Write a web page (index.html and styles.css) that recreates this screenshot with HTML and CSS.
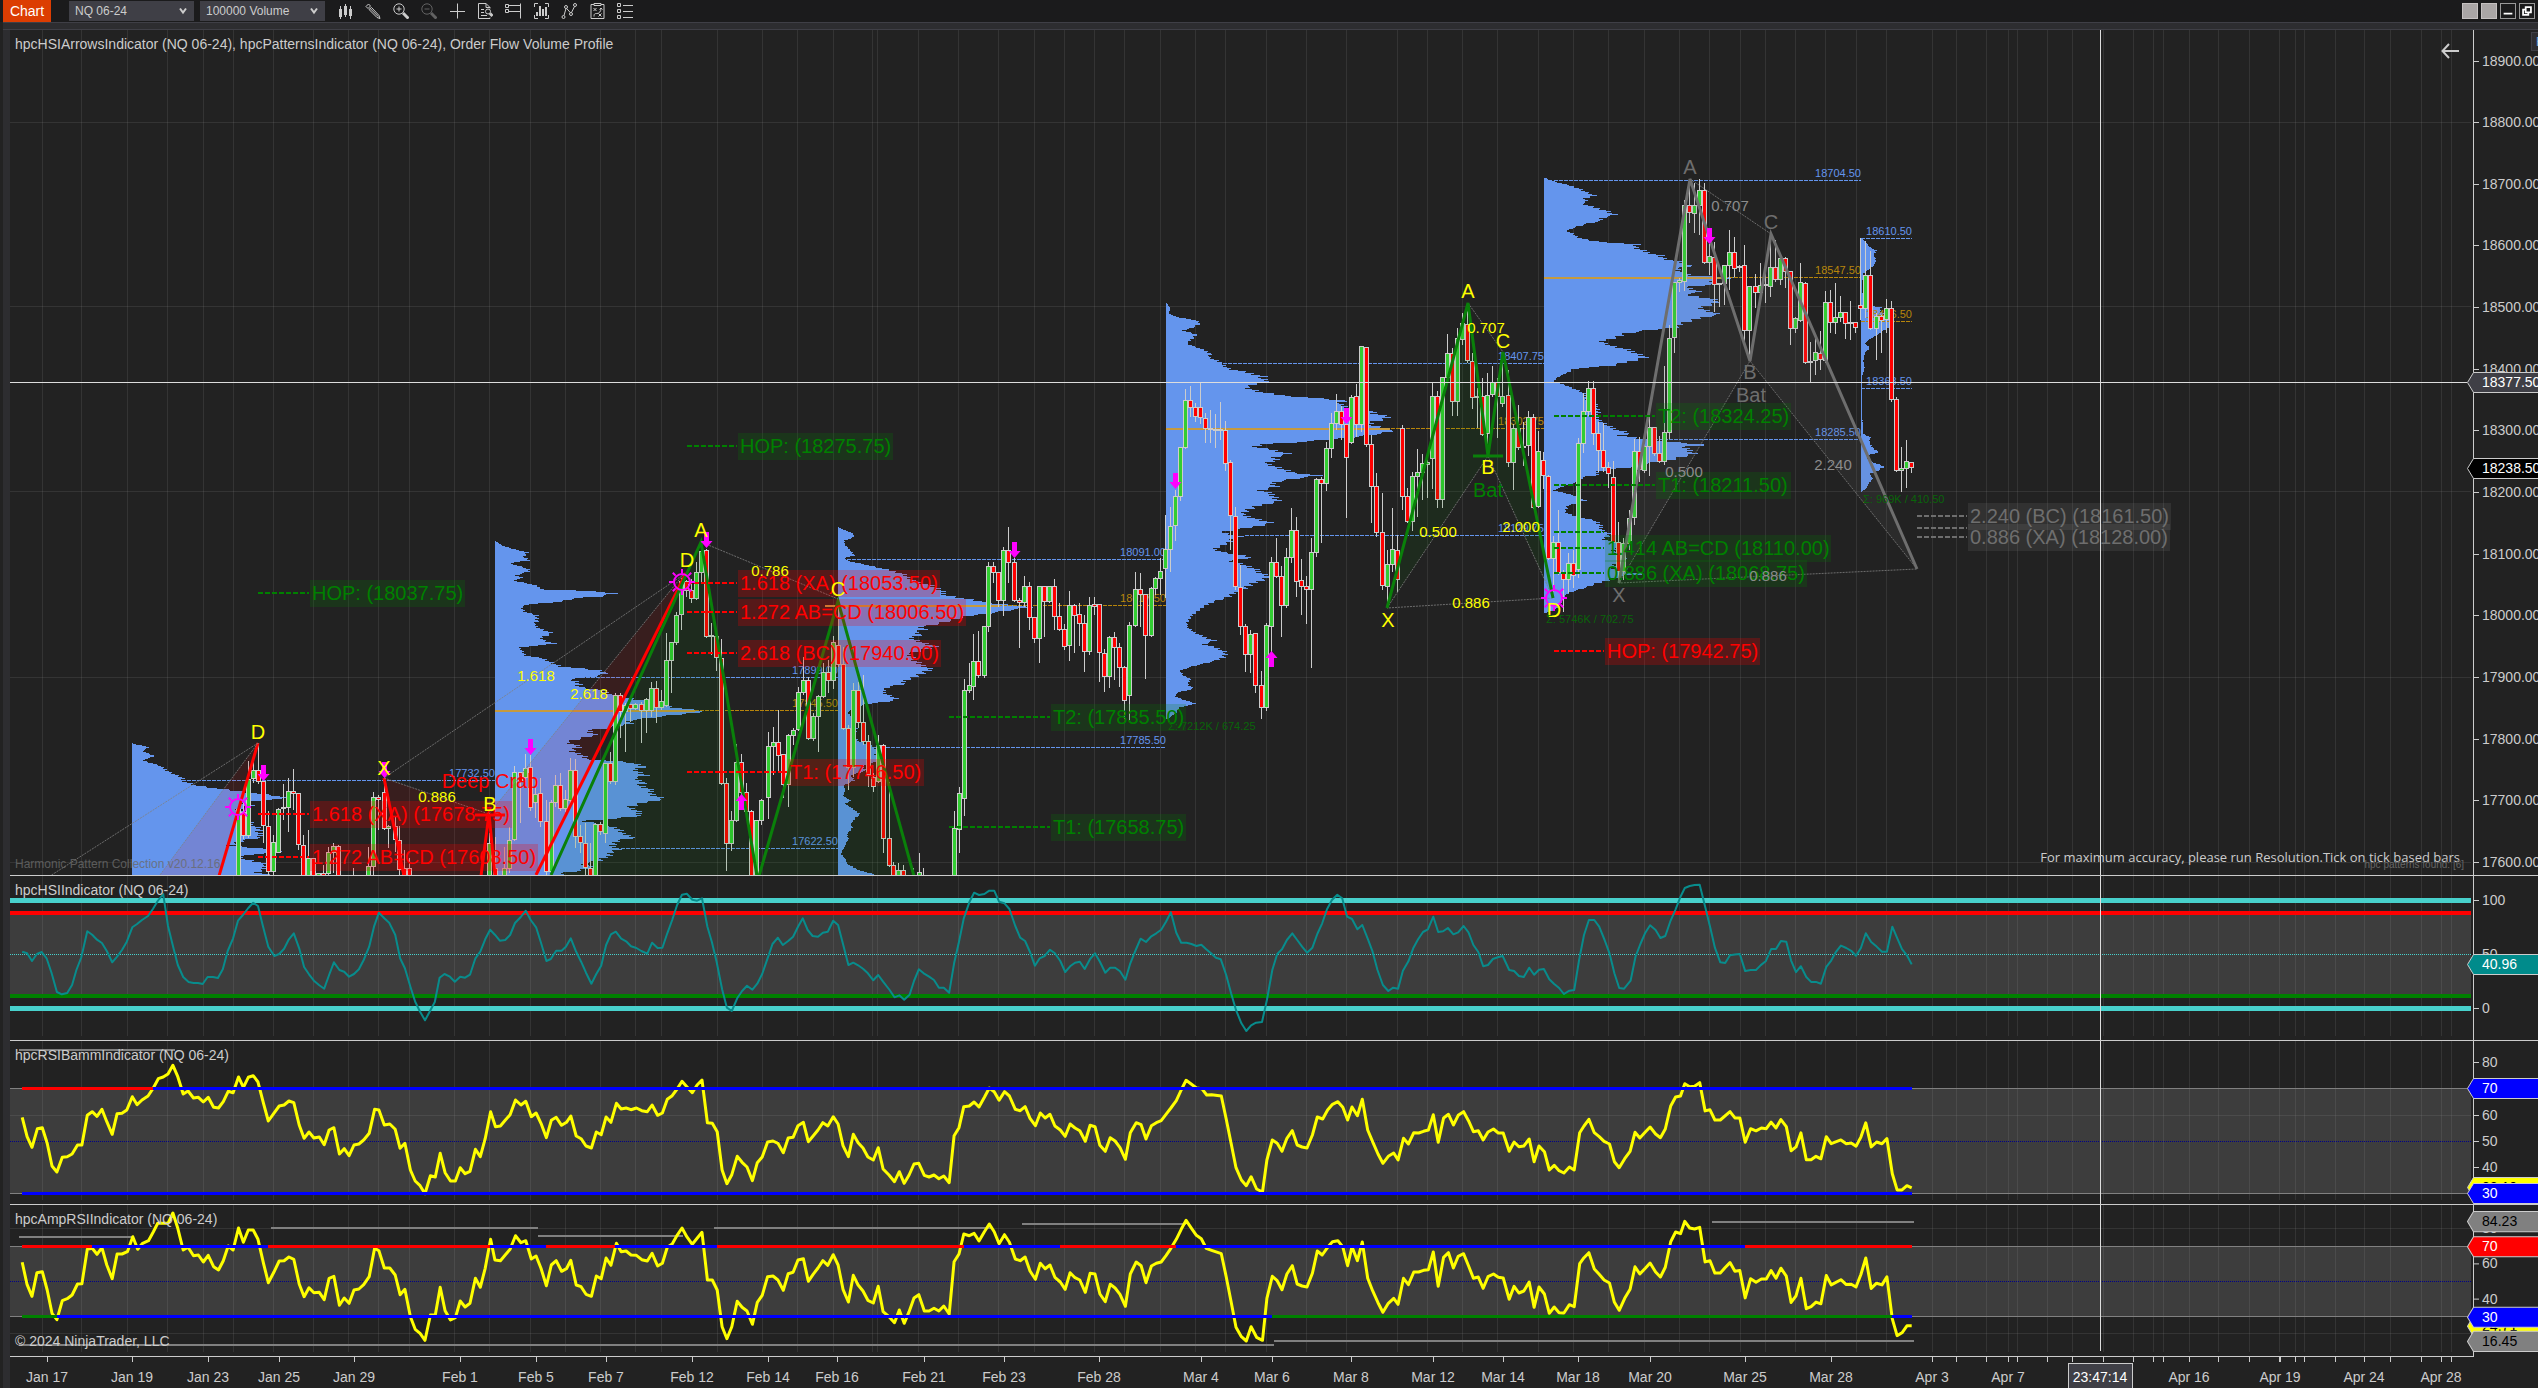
FILE: index.html
```html
<!DOCTYPE html>
<html lang="en">
<head>
<meta charset="utf-8">
<title>Chart - NQ 06-24</title>
<link rel="stylesheet" href="styles.css">
</head>
<body>
<header class="toolbar">
  <a class="tab" href="#chart">Chart</a>
  <label class="picker picker-instrument">
    <select aria-label="Instrument"><option>NQ 06-24</option></select>
    <svg class="chevron" viewBox="0 0 8 8"><path d="M1 1.5 4 5.5 7 1.5"/></svg>
  </label>
  <label class="picker picker-interval">
    <select aria-label="Interval"><option>100000 Volume</option></select>
    <svg class="chevron" viewBox="0 0 8 8"><path d="M1 1.5 4 5.5 7 1.5"/></svg>
  </label>
  <nav class="tools">
    <button type="button" aria-label="Chart style"><svg viewBox="0 0 16 16"><path d="M3.5 3v13M8.500 1v13M13.500 3v13"/><path class="fill" d="M2 6h3v8H2zM7 3h3v9H7zM12 6h3v7h-3z"/></svg></button>
    <button type="button" aria-label="Drawing tools"><svg viewBox="0 0 16 16"><path d="M1 3.500 3.500 1l2 2L3 5.500zM4 6.500 12 14.500l3 1-1-3L6.500 4.500zM5.200 5.500l8 8"/></svg></button>
    <button type="button" aria-label="Zoom in"><svg viewBox="0 0 16 16"><circle cx="6" cy="6" r="5.200"/><path d="M3.500 6h5M6 3.500v5"/><path class="thick" d="m10 10 5.500 5.500"/></svg></button>
    <button type="button" class="off" aria-label="Zoom out"><svg viewBox="0 0 16 16"><circle cx="6" cy="6" r="5.200"/><path d="M3.500 6h5"/><path class="thick" d="m10 10 5.500 5.500"/></svg></button>
    <button type="button" aria-label="Cross hair"><svg viewBox="0 0 16 16"><path d="M8.500.5v15M1 8.500h15"/></svg></button>
    <button type="button" aria-label="Data box"><svg viewBox="0 0 16 16"><path d="M13 14.500v1H1.500V.5H9l4 4v1M9 .5v4h4M4 6.500h3M4 9.500h3M4 12.500h6"/><circle cx="11" cy="8.500" r="2.500"/><path class="thick" d="m13 10.500 2.500 2.500"/></svg></button>
    <button type="button" aria-label="Chart trader"><svg viewBox="0 0 16 16"><path d="M.5 1.500h3v3h-3zM.5 6.500h3v3h-3zM4 2.500h12M4 8.500h12M15.500.5v15"/></svg></button>
    <button type="button" aria-label="Indicators"><svg viewBox="0 0 16 16"><path d="M1.500 4V.5H5M12 .5h3.500V4M15.500 12v3.500H12M5 15.500H1.500V12"/><path class="fill" d="M3 9h2v4H3zM6 3h2v10H6zM9 6h2v7H9zM12 4h2v9h-2z"/></svg></button>
    <button type="button" aria-label="Strategies"><svg viewBox="0 0 16 16"><circle cx="2.500" cy="14" r="1.500"/><circle cx="5" cy="4" r="1.500"/><circle cx="10" cy="11" r="1.500"/><circle cx="14" cy="2" r="1.500"/><path d="M3 12.500 5 5.500M5.500 5.300 9.500 9.800M10.500 9.500 13.500 3.500"/></svg></button>
    <button type="button" aria-label="Strategy builder"><svg viewBox="0 0 16 16"><path d="M5 1.500H2v14h13v-14h-3M5 .5h7v2H5zM4.500 5l3 3M7.500 5l-3 3M9.500 10.500l3 3M12.500 10.500l-3 3M5 13.500c0-3 1-3 3-3s4-2 4-5M10.500 6.500l1.500-1.500 1.500 1.500"/></svg></button>
    <button type="button" aria-label="Properties"><svg viewBox="0 0 16 16"><path d="M.5.5h3v3h-3zM.5 6.500h3v3h-3zM.5 12.500h3v3h-3zM6 2.500h10M6 8.500h10M6 14.500h10"/></svg></button>
  </nav>
  <div class="window-buttons">
    <button type="button" class="plain" aria-label="Link instrument"></button>
    <button type="button" class="plain" aria-label="Link interval"></button>
    <button type="button" aria-label="Minimize"><svg viewBox="0 0 16 16"><path class="fill" d="M3 10h10v2H3z"/></svg></button>
    <button type="button" aria-label="Restore"><svg viewBox="0 0 16 16"><path class="heavy" d="M6.500 3.500h6v6h-6zM6 6.500H3.500v6h6V10"/></svg></button>
  </div>
</header>
<main class="chart" id="chart">
  <section class="panel">
    <h2 class="title">hpcHSIArrowsIndicator (NQ 06-24), hpcPatternsIndicator (NQ 06-24), Order Flow Volume Profile</h2>
    <svg class="plot" id="price" viewBox="10 30 2463 845" preserveAspectRatio="xMaxYMid slice"></svg>
    <svg class="axis" id="price-axis" viewBox="2474 30 64 845" preserveAspectRatio="xMinYMid slice"></svg>
    <button type="button" class="back" aria-label="Back"><svg viewBox="0 0 18 16"><path d="M18 8H1.500M8 1 1.500 8 8 15"/></svg></button>
    <button type="button" class="fixed-scale" aria-label="Fixed scale">F</button>
    <p class="watermark">Harmonic Pattern Collection v20.12.16</p>
    <p class="notice">For maximum accuracy, please run Resolution.Tick on tick based bars</p>
    <p class="found">hpc patterns found: [6]</p>
  </section>
  <section class="panel">
    <h2 class="title">hpcHSIIndicator (NQ 06-24)</h2>
    <svg class="plot" id="hsi" viewBox="10 876 2463 164" preserveAspectRatio="xMaxYMid slice"></svg>
    <svg class="axis" id="hsi-axis" viewBox="2474 876 64 164" preserveAspectRatio="xMinYMid slice"></svg>
  </section>
  <section class="panel">
    <h2 class="title">hpcRSIBammIndicator (NQ 06-24)</h2>
    <svg class="plot" id="rsi" viewBox="10 1041 2463 163" preserveAspectRatio="xMaxYMid slice"></svg>
    <svg class="axis" id="rsi-axis" viewBox="2474 1041 64 163" preserveAspectRatio="xMinYMid slice"></svg>
  </section>
  <section class="panel panel-last">
    <h2 class="title">hpcAmpRSIIndicator (NQ 06-24)</h2>
    <svg class="plot" id="amp" viewBox="10 1205 2463 151" preserveAspectRatio="xMaxYMid slice"></svg>
    <svg class="axis" id="amp-axis" viewBox="2474 1205 64 151" preserveAspectRatio="xMinYMid slice"></svg>
    <p class="copyright">© 2024 NinjaTrader, LLC</p>
  </section>
  <footer class="dates">
    <svg class="plot" id="dates" viewBox="10 1357 2463 31" preserveAspectRatio="xMaxYMid slice"></svg>
  </footer>
</main>
<script src="chart.js"></script>
</body>
</html>
```
FILE: styles.css
```css
* { box-sizing: border-box; }
body {
  margin: 0;
  height: 100vh;
  display: flex;
  flex-direction: column;
  overflow: hidden;
  background: #222;
  color: #ccc;
  font-family: "Liberation Sans", Arial, sans-serif;
  font-size: 14px;
}
button { margin: 0; padding: 0; border: 0; background: none; color: inherit; font: inherit; }
h2, p { margin: 0; font-size: 14px; line-height: 16px; font-weight: 400; white-space: nowrap; }

.toolbar {
  flex: none;
  display: flex;
  align-items: center;
  height: 22px;
  padding: 0 3px;
  background: #1b1b1c;
}
.tab {
  width: 48px;
  line-height: 22px;
  text-align: center;
  background: #dc3d02;
  color: #fff;
  text-decoration: none;
}
.picker {
  position: relative;
  display: flex;
  height: 20px;
  background: #3f3f46;
}
.picker-instrument { width: 125px; margin-left: 18px; }
.picker-interval { width: 125px; margin-left: 6px; }
.picker select {
  appearance: none;
  width: 100%;
  padding: 0 6px;
  border: 0;
  background: none;
  color: #ccc;
  font: 12px "Liberation Sans", Arial, sans-serif;
}
.chevron { position: absolute; right: 7px; top: 6px; width: 8px; height: 8px; fill: none; stroke: #ccc; stroke-width: 2; }
.tools { display: flex; margin-left: 6px; }
.tools button { width: 28px; height: 22px; padding: 3px 6px; }
.tools svg { display: block; width: 16px; height: 16px; fill: none; stroke: #ccc; stroke-width: 1; }
.tools .fill { fill: #ccc; stroke: none; }
.tools .thick { stroke-width: 3; }
.tools .off { opacity: .4; }
.window-buttons { display: flex; gap: 3px; margin-left: auto; }
.window-buttons button { width: 16px; height: 16px; border: 1px solid #999; background: #1b1b1c; }
.window-buttons svg { display: block; width: 14px; height: 14px; }
.window-buttons .fill { fill: #fff; }
.window-buttons .heavy { fill: none; stroke: #fff; stroke-width: 2; }
.window-buttons .plain { background: #aaa6a6; border-color: #c5c1c1; }

.chart {
  flex: 1;
  min-height: 0;
  display: grid;
  grid-template-rows: 846fr 165fr 164fr 152fr 31fr;
  border-top: 8px solid #2d2d30;
  border-left: 7px solid #2d2d30;
  margin-left: 3px;
  position: relative;
}
.chart::before, .chart::after { content: ""; position: absolute; left: -7px; right: 0; height: 1px; background: #3f3f46; }
.chart::before { top: -8px; }
.chart::after { top: -1px; }
.panel {
  position: relative;
  display: grid;
  grid-template-columns: 1fr 65px;
  min-height: 0;
  border-bottom: 1px solid #ccc;
}
.panel-last { border-bottom: 0; }
.panel-last .plot { border-bottom: 1px solid #ccc; }
.plot, .axis { display: block; width: 100%; height: 100%; min-height: 0; }
.axis { border-left: 1px solid #ccc; overflow: visible; }
.dates { display: grid; grid-template-columns: 1fr; margin-right: 65px; min-height: 0; }
.title { position: absolute; left: 5px; top: 6px; z-index: 1; }
.copyright { position: absolute; left: 5px; bottom: 8px; }
.watermark { position: absolute; left: 5px; bottom: 3px; font-size: 12px; color: #6a6a6a; opacity: .8; }
.notice { position: absolute; right: 78px; bottom: 10px; font-family: "Open Sans", "Noto Sans", sans-serif; font-size: 13px; }
.found { position: absolute; right: 74px; bottom: 2px; font-size: 10px; color: #666; }
.back { position: absolute; right: 79px; top: 13px; width: 18px; height: 16px; }
.back svg { display: block; fill: none; stroke: #ccc; stroke-width: 2; }
.fixed-scale {
  position: absolute; right: -14px; top: 2px; width: 21px; height: 19px;
  padding-left: 4px; text-align: left; font-size: 12px;
  border: 1px solid #3f3f46; background: #2d2d30; color: #6fa8dc;
}

text { fill: #ccc; font-size: 14px; }
.mid { text-anchor: middle; }
.end { text-anchor: end; }
.grid { stroke: rgba(150, 150, 150, .16); }
.tick { stroke: #ccc; }
.cross { stroke: #ddd; }
.profile { fill: #6495ed; }
.level { stroke: #6495ed; stroke-dasharray: 4 1; }
.poc { stroke: #b8860b; stroke-dasharray: 4 1; }
.poc-solid { stroke: #c69a3e; stroke-width: 2; }
.level-text { font-size: 11px; fill: #6495ed; }
.poc-text { font-size: 11px; fill: #b8860b; }
.sum { font-size: 11px; fill: #0a640a; }
.wick { stroke: #ccc; }
.up { fill: #32cd32; stroke: #ccc; }
.down { fill: #f00; stroke: #ccc; }
.dots { stroke: #808080; stroke-opacity: .8; stroke-dasharray: 2 1; fill: none; }
.leg { fill: none; stroke-width: 2; }
.leg.green { stroke: #0a800a; }
.leg.red { stroke: #f00; }
.leg.gray { stroke: #6e6e6e; }
.area.green { fill: rgba(0, 128, 0, .1); }
.area.red { fill: rgba(255, 0, 0, .1); }
.area.gray { fill: rgba(128, 128, 128, .1); }
.dash { stroke-width: 2; stroke-dasharray: 5 2; }
.dash.green { stroke: #008000; }
.dash.red { stroke: #f00; }
.dash.gray { stroke: #6e6e6e; }
.box.green { fill: rgba(0, 128, 0, .2); }
.box.red { fill: rgba(255, 0, 0, .24); }
.box.gray { fill: rgba(128, 128, 128, .16); }
.name { font-size: 20px; }
text.green { fill: #008000; }
text.red { fill: #f00; }
text.gray { fill: #6e6e6e; }
text.yellow { fill: #ff0; }
.ratio { font-size: 15px; fill: #ff0; }
.ratio.gray { fill: #8c8c8c; }
.arrow { fill: #f0f; }
.sun { fill: none; stroke: #f0f; stroke-width: 2; }
.shade { fill: #3d3d3d; }
.aqua { stroke: #48d1cc; stroke-width: 5; }
.high { stroke: #f00; stroke-width: 4; }
.low { stroke: #008000; stroke-width: 4; }
.mean { stroke: #48d1cc; stroke-dasharray: 1 1; }
.navy { stroke: #00008b; stroke-dasharray: 1 1; }
.bound { stroke: #808080; }
.swing { stroke: #808080; stroke-width: 2; }
.series { fill: none; stroke-width: 2; stroke-linejoin: round; }
.teal { stroke: #088c8c; }
.gold { stroke: #ff0; stroke-width: 3; }
.leg.green, .leg.gray, .leg.red { stroke-width: 3; }
.tag { stroke: #ccc; }
```
FILE: chart.js
```js
const NS = 'http://www.w3.org/2000/svg';
function add(root, tag, attrs, text) {
  const el = document.createElementNS(NS, tag);
  for (const k in attrs) el.setAttribute(k, attrs[k]);
  if (text !== undefined) el.textContent = text;
  root.appendChild(el);
  return el;
}
const byId = id => document.getElementById(id);
const line = (root, cls, x1, y1, x2, y2) => add(root, 'line', { class: cls, x1, y1, x2, y2 });
const label = (root, cls, x, y, t) => add(root, 'text', { class: cls, x, y }, t);

// A tile stores its data on a finer grid than the plot: [origin x, origin y, units per px x, units per px y].
const tiles = {
  A: [100, 480, 2.8, 3], B: [640, 480, 2.8, 3], C: [1140, 290, 3, 3], D: [1520, 150, 3, 3],
  G: [0, 870, 1.8447, 3], H: [850, 870, 1.8447, 3], I: [1690, 840, 1.849, 2.861]
};
const px = (t, x) => Math.round(tiles[t][0] + x / tiles[t][2]);
const py = (t, y) => Math.round(tiles[t][1] + y / tiles[t][3]);

const vertical = [42, 81, 127, 167, 203, 233, 273, 313, 348, 378, 409, 454, 489, 530, 565, 600, 635, 661, 717, 762, 797, 833, 872, 877, 918, 958, 998, 1034, 1064, 1094, 1124, 1160, 1195, 1225, 1266, 1306, 1346, 1397, 1427, 1462, 1497, 1538, 1573, 1608, 1644, 1679, 1709, 1740, 1765, 1795, 1825, 1856, 1886, 1932, 1956, 1986, 2008, 2017, 2047, 2072, 2103, 2133, 2153, 2163, 2189, 2218, 2249, 2279, 2295, 2304, 2335, 2364, 2390, 2421, 2441, 2451];
function grid(root, top, bottom, rows) {
  vertical.forEach(x => line(root, 'grid', x + .5, top, x + .5, bottom));
  rows.forEach(y => line(root, 'grid', 10, y + .5, 2471, y + .5));
}

// ---- price panel ----
const price = byId('price');
grid(price, 30, 875, [122, 306, 491, 677, 862]);

// left edge, then "y,right edge" pairs
const profiles = [
  ['A', 90, '790,92 800,138 812,118 826,153 840,120 855,165 880,205 890,228 900,230 915,270 925,330 935,410 945,490 953,530 960,440 968,400 975,425 985,385 1000,400 1030,420 1045,450 1055,440 1070,455 1080,400 1095,358 1105,470 1112,515 1118,480 1125,390 1135,400 1150,470 1158,450 1165,470 1175,440 1185,475'],
  ['A', 1106, '183,1110 195,1125 205,1155 215,1198 230,1185 240,1203 248,1145 262,1190 272,1205 285,1165 292,1185 300,1155 310,1205 320,1235 326,1220 330,1330 338,1450 348,1400 355,1315 362,1300 372,1200 380,1180 395,1190 405,1225 420,1225 432,1215 445,1235 458,1265 470,1235 480,1245 490,1275 500,1175 515,1185 525,1190 535,1245 545,1262 558,1290 570,1400 575,1422 582,1410 590,1370 596,1305 605,1345 620,1340 628,1400 640,1430 650,1460 660,1520 670,1560 680,1600 692,1690 700,1640 710,1560 720,1480 730,1480 742,1430 750,1365 765,1385 785,1305 800,1345 812,1320 825,1350 835,1360 845,1480 858,1525 865,1500 875,1510 885,1530 893,1490 905,1530 915,1510 930,1545 945,1550 955,1578 965,1530 980,1480 990,1500 1005,1518 1015,1440 1022,1340 1030,1400 1045,1455 1060,1460 1070,1505 1080,1450 1095,1430 1105,1460 1115,1430 1130,1420 1140,1400 1150,1350 1160,1380 1170,1350 1178,1290 1185,1290'],
  ['B', 554, '142,557 155,590 163,600 175,590 180,572 195,575 210,590 225,600 233,570 242,585 252,630 265,680 280,740 300,760 315,820 330,840 345,860 358,930 368,980 375,1060 380,1100 388,1040 398,980 405,930 415,890 430,830 438,790 446,800 455,770 462,785 470,760 480,775 490,800 497,825 505,810 520,750 530,760 545,780 555,790 568,815 580,790 590,765 600,740 610,745 618,700 628,680 640,690 655,720 662,700 670,640 678,610 690,590 697,580 705,590 720,595 735,600 745,610 758,600 770,605 782,610 795,645 805,665 815,690 822,660 832,670 845,660 858,620 870,635 885,590 900,600 915,570 930,575 945,568 960,590 970,575 985,595 1002,618 1015,600 1030,590 1042,595 1060,580 1075,585 1090,575 1105,570 1120,562 1135,575 1150,580 1162,600 1172,620 1178,650 1185,650'],
  ['C', 78, '38,80 55,92 68,85 80,110 88,165 98,182 110,160 120,130 132,170 145,155 160,142 175,180 188,215 200,205 215,240 235,265 250,340 258,375 263,360 272,388 282,345 292,320 305,360 315,430 322,520 330,615 340,590 345,610 355,640 362,700 370,700 380,750 388,730 395,690 405,690 415,750 420,760 428,730 440,640 448,560 455,480 462,360 470,340 478,400 490,450 500,400 510,405 520,380 530,410 545,450 555,540 565,460 575,400 588,410 600,360 612,400 625,410 632,415 645,360 660,320 672,305 685,350 697,395 705,360 715,310 725,240 738,300 745,280 755,270 775,220 785,250 800,335 810,270 822,310 835,340 845,360 858,390 870,360 885,330 905,290 920,265 935,215 950,190 970,160 985,150 998,140 1012,145 1030,170 1042,200 1050,225 1062,190 1075,240 1085,258 1100,250 1110,230 1120,190 1128,155 1140,120 1155,130 1165,150 1182,145 1195,160 1205,115 1218,105 1228,130 1240,170 1250,120 1265,110 1285,85'],
  ['D', 72, '85,80 95,110 105,150 115,180 125,200 135,222 145,195 153,200 160,185 170,220 180,260 193,285 203,240 210,250 220,200 230,165 240,140 250,160 262,175 272,220 282,355 292,345 305,380 315,425 325,430 335,480 345,520 355,470 365,480 375,520 380,640 384,645 388,560 400,600 410,500 425,540 432,490 445,580 452,595 460,580 470,540 480,560 492,598 500,550 510,520 520,480 530,470 540,380 550,310 560,290 572,245 585,270 595,310 605,345 620,378 635,320 645,280 655,160 668,140 682,110 692,100 705,140 720,175 735,200 750,200 765,230 785,235 795,230 810,240 825,260 840,300 848,330 855,300 865,360 875,460 883,565 890,480 898,510 910,525 920,480 930,440 940,380 950,330 962,230 972,240 980,190 995,170 1008,130 1020,100 1035,165 1050,195 1065,145 1085,135 1098,165 1110,225 1125,240 1140,250 1150,270 1165,250 1180,300 1200,285 1215,300 1230,310 1240,290 1255,270 1265,320 1270,380 1276,310 1285,270 1295,245 1310,200 1325,150 1340,130 1360,120 1375,110 1388,75'],
  ['D', 1024, '265,1026 280,1042 290,1050 300,1068 315,1062 330,1067 345,1063 355,1050 368,1030 400,1026 440,1028 465,1040 470,1085 480,1080 490,1090 500,1105 512,1120 520,1115 530,1108 545,1085 555,1070 568,1045 580,1035 592,1050 605,1035 630,1030 650,1034 680,1026 720,1026 770,1026 820,1028 850,1030 860,1050 880,1050 895,1060 905,1080 912,1050 925,1040 935,1060 948,1092 960,1075 970,1050 985,1058 1000,1045 1012,1040 1024,1026']
];
profiles.forEach(([t, left, data]) => {
  const [ox, oy, sx, sy] = tiles[t];
  const pts = data.split(' ').map(p => p.split(',').map(Number)).map(([y, x]) => [oy + y / sy, ox + x / sx]);
  const x0 = Math.round(ox + left / sx);
  let d = `M${x0} ${Math.round(pts[0][0])}`;
  let i = 0;
  for (let y = Math.round(pts[0][0]); y < pts[pts.length - 1][0]; y++) {
    while (i < pts.length - 2 && pts[i + 1][0] < y) i++;
    const [ya, xa] = pts[i], [yb, xb] = pts[i + 1];
    const k = Math.max(0, Math.min(1, (y - ya) / (yb - ya)));
    const base = xa + (xb - xa) * k;
    const jag = ((y * 37) % 11 - 5) / 5 * Math.min(5, (base - x0) * .06);
    d += `H${Math.round(base + jag)}v1`;
  }
  add(price, 'path', { class: 'profile', d: d + `H${x0}z` });
});

// tile, from, to, y, tile of the end, value, kind
[
  ['A', 230, 'A', 1105, 901, '17732.50', 'level'],
  ['A', 1305, 'B', 553, 592, '17899.00', 'level'],
  ['A', 1106, 'B', 553, 691, '17845.50', 'poc'],
  ['A', 1460, 'B', 553, 1105, '17622.50', 'level'],
  ['B', 580, 'B', 1472, 238, '18091.00', 'level'],
  ['B', 555, 'B', 1472, 376, '18017.50', 'poc'],
  ['B', 690, 'B', 1472, 801, '17785.50', 'level'],
  ['C', 235, 'C', 1212, 220, '18407.75', 'level'],
  ['C', 78, 'C', 1212, 415, '18302.75', 'poc'],
  ['C', 315, 'C', 1212, 736, '18129.75', 'level'],
  ['D', 102, 'D', 1022, 91, '18704.50', 'level'],
  ['D', 72, 'D', 1022, 382, '18547.50', 'poc'],
  ['D', 72, 'D', 1022, 868, '18285.50', 'level'],
  ['D', 1024, 'D', 1176, 265, '18610.50', 'level'],
  ['D', 1024, 'D', 1176, 514, '18476.50', 'poc'],
  ['D', 1024, 'D', 1176, 715, '18368.50', 'level']
].forEach(([t1, x1, t2, x2, y, value, kind]) => {
  line(price, kind, px(t1, x1), py(t1, y) + .5, px(t2, x2), py(t1, y) + .5);
  label(price, kind + '-text end', px(t2, x2), py(t1, y) - 3, value);
});
line(price, 'poc-solid', 495, 711, 695, 711);
line(price, 'poc-solid', 825, 606, 1000, 606);
line(price, 'poc-solid', 1166, 429, 1390, 429);
line(price, 'poc-solid', 1544, 278, 1722, 278);

// bars: x high open/close top, bottom, low, direction
const bars = {
A: '385 975 990 1200 1200 g,399 970 1000 1067 1078 r,413 843 900 1067 1075 g,427 845 872 898 910 g,441 790 872 907 912 r,455 905 907 1038 1088 r,469 993 1040 1177 1185 r,485 1065 1090 1177 1185 g,499 985 990 1119 1119 g,513 912 985 988 1020 g,527 895 935 983 1055 g,541 867 935 941 990 r,555 940 943 1095 1110 r,569 1065 1098 1200 1200 r,583 1050 1138 1200 1200 g,597 1135 1138 1200 1200 r,611 1178 1182 1200 1200 g,625 1155 1182 1200 1200 r,639 1100 1118 1183 1185 g,653 1090 1102 1118 1180 g,667 1095 1102 1200 1200 r,709 1163 1190 1200 1200 r,751 1100 1162 1200 1200 g,765 935 953 1162 1185 g,779 945 953 960 1050 r,794 895 940 1047 1050 r,807 1035 1040 1047 1105 g,825 1010 1040 1080 1115 r,838 1038 1082 1170 1185 r,852 1110 1168 1200 1200 r,866 1135 1168 1200 1200 r,1090 1060 1093 1200 1200 g,1105 1070 1168 1200 1200 r,1132 1100 1168 1200 1200 g,1146 1040 1082 1168 1180 g,1160 858 878 1080 1082 g,1177 875 880 905 1028 r,1191 822 868 893 905 g,1205 825 865 985 992 r,1219 895 945 970 1015 g,1233 893 943 1025 1040 r,1248 960 1025 1177 1185 r,1262 960 970 1177 1185 g,1275 885 918 970 980 g,1289 880 918 988 992 r,1303 930 960 988 995 g,1317 833 872 963 975 g,1331 838 872 1070 1105 r,1345 1035 1070 1090 1120 r,1359 1030 1092 1165 1185 r,1373 1090 1168 1200 1200 r,1387 1030 1035 1200 1200 g,1401 1025 1035 1055 1065 r,1415 850 853 1062 1090 g,1429 815 853 905 912 r,1443 640 648 905 915 g,1457 640 647 697 775 r,1471 670 677 697 815 g,1485 672 675 687 725 r,1499 670 675 687 690 g,1515 665 675 693 790 r,1530 655 660 692 760 g',
B: '32 605 626 692 710 g,46 602 626 685 728 r,60 630 665 685 690 g,74 460 542 677 680 g,88 490 490 542 640 g,102 395 407 490 495 g,116 295 305 405 450 g,130 300 305 333 350 r,144 298 333 357 370 r,158 245 278 357 360 g,172 185 215 278 310 g,186 208 213 472 473 r,200 430 468 472 525 g,214 468 470 535 572 r,228 477 538 912 915 r,242 893 913 1093 1172 r,256 993 1022 1093 1112 g,270 793 850 1022 1025 g,284 822 850 940 955 r,298 910 940 997 1000 r,312 990 995 1200 1200 r,326 1020 1022 1200 1200 g,340 958 962 1022 1035 g,357 757 802 955 1018 g,371 742 790 802 885 g,385 690 790 827 880 r,399 822 825 915 955 r,413 762 767 915 980 g,427 743 752 767 795 g,441 620 640 750 752 g,455 530 603 640 645 g,469 590 603 778 780 r,483 700 712 778 782 g,497 645 652 712 815 g,511 550 580 650 655 g,525 540 580 603 640 r,539 468 490 603 628 g,553 365 497 555 560 r,567 500 555 748 750 r,581 735 748 865 930 r,595 610 633 865 890 g,609 605 633 730 745 r,623 585 730 787 795 r,637 765 787 885 920 r,651 880 895 922 935 r,665 765 797 907 910 g,679 793 798 1078 1120 r,697 905 1078 1157 1160 r,709 1145 1157 1200 1200 r,723 1150 1172 1200 1200 g,737 1155 1172 1200 1200 r,780 1120 1180 1200 1200 g,793 1165 1200 1210 1210 g,765 1165 1200 1210 1210 g,878 993 1048 1200 1200 g,892 920 942 1050 1118 g,906 597 633 958 1008 g,920 548 618 633 640 g,933 462 547 620 660 g,947 453 547 588 595 r,962 438 442 588 595 g,975 247 260 442 455 g,989 245 260 280 308 r,1003 278 280 362 380 r,1017 200 213 363 408 g,1031 142 213 250 308 r,1048 235 250 362 365 r,1062 355 362 370 505 r,1076 288 322 370 380 g,1090 305 322 415 450 r,1104 415 415 478 488 r,1118 320 322 478 550 g,1132 318 322 367 470 r,1146 320 322 367 370 g,1160 298 322 412 450 r,1174 368 412 450 452 r,1188 432 450 500 510 r,1202 333 378 497 542 g,1216 372 378 408 518 r,1230 370 405 433 498 r,1244 405 433 517 575 r,1258 350 377 517 525 g,1272 352 375 381 405 r,1286 373 375 520 605 r,1300 508 523 590 635 r,1314 468 475 590 625 g,1328 455 475 505 600 r,1342 490 505 563 620 r,1356 558 563 663 718 r,1370 425 438 647 720 g,1387 275 330 438 440 g,1401 280 330 345 440 r,1415 345 345 467 597 r,1430 320 328 467 470 g,1443 290 297 328 345 g,1457 235 275 297 345 g',
C: '76 675 780 838 925 g,91 652 710 780 845 g,106 600 622 708 752 g,121 472 475 622 632 g,136 297 332 475 478 g,151 288 332 353 380 r,166 340 355 382 395 r,181 278 355 385 402 r,196 368 387 417 460 r,211 360 417 421 458 g,226 372 419 422 475 g,241 337 420 423 450 g,256 393 422 522 543 r,271 510 520 678 780 r,286 652 680 891 900 r,301 825 893 1012 1035 r,316 1002 1012 1095 1145 r,331 1020 1035 1095 1148 g,346 1030 1033 1188 1208 r,364 1143 1187 1255 1287 r,379 1000 1007 1255 1262 g,394 800 820 1012 1085 g,409 743 820 862 865 r,424 828 862 948 1042 r,439 775 805 947 955 g,454 655 722 805 818 g,469 682 722 875 920 r,484 807 873 892 975 r,499 858 892 900 1003 r,514 743 788 900 1133 g,529 565 570 788 802 g,544 562 570 582 758 r,559 455 478 582 602 g,574 370 403 478 505 g,589 312 367 403 420 g,604 348 367 405 450 r,619 353 405 505 683 r,634 315 325 460 462 g,649 283 322 405 440 r,664 172 172 405 425 g,679 172 173 465 470 r,694 435 465 590 700 r,709 548 592 730 740 r,727 610 728 887 900 r,742 780 825 890 950 g,757 655 780 825 845 g,772 735 782 870 905 r,787 405 417 620 660 r,802 593 620 697 700 r,817 545 560 697 722 g,832 478 550 562 680 g,847 493 523 548 630 g,862 488 520 524 625 g,877 275 320 508 598 g,892 303 320 630 655 r,907 263 265 630 653 g,922 132 193 265 275 g,937 175 193 337 378 r,952 115 148 337 378 g,967 68 102 150 165 g,982 45 105 213 218 r,997 190 215 325 357 r,1012 295 320 323 415 g,1027 265 320 435 438 r,1042 250 317 433 495 g,1057 228 280 316 320 g,1072 265 280 320 443 r,1087 185 320 343 350 g,1105 240 318 520 530 r,1120 402 418 520 600 g,1135 345 418 475 480 r,1150 395 470 474 528 g,1165 363 385 468 498 g,1180 372 385 653 658 r,1195 422 485 652 655 g,1210 485 512 558 598 r,1225 555 560 807 810 r,1240 738 760 808 905 g,1255 660 760 850 855 r,1270 840 853 870 965 r,1285 790 823 870 908 g,1300 780 823 858 895 r,1315 443 463 840 865 g,1330 310 365 463 488 g,1345 273 298 365 378 g,1360 273 298 433 465 r,1375 395 433 482 545 r,1390 398 482 533 545 r,1405 515 533 553 595 r',
D: '280 932 985 1178 1185 r,295 1115 1178 1267 1300 r,310 1165 1183 1267 1290 g,328 1080 1107 1183 1200 g,343 868 905 1105 1125 g,358 862 905 960 995 r,373 870 890 962 970 g,388 795 835 890 978 g,403 830 835 912 918 r,418 858 912 935 940 r,433 648 848 937 945 g,448 525 568 848 868 g,463 395 400 565 608 g,478 385 392 400 425 g,493 150 167 397 423 g,508 87 167 190 218 r,523 100 167 193 250 g,538 88 122 167 255 g,553 98 122 340 342 r,568 282 322 340 375 g,583 275 323 405 487 r,598 400 402 406 470 g,613 345 347 403 465 g,628 240 310 347 420 g,643 260 310 357 380 r,658 345 351 355 365 g,673 285 347 543 575 r,688 408 412 543 632 g,706 372 410 430 475 r,721 340 407 430 432 g,736 370 405 409 458 g,751 255 355 410 440 g,766 270 355 390 395 r,781 310 328 390 405 g,796 322 328 367 415 r,811 365 367 538 585 r,826 500 508 538 550 g,841 338 400 512 515 g,856 395 402 640 642 r,871 575 636 640 695 g,886 565 610 633 675 g,901 543 612 630 660 r,916 422 460 632 640 g,931 420 460 520 548 r,946 398 505 520 552 g,961 438 490 505 515 g,976 485 490 523 568 r,991 452 518 522 570 g,1006 515 519 535 550 r,1021 265 467 478 510 r,1036 273 377 477 503 g,1051 302 377 538 540 r,1069 490 502 538 630 g,1084 495 502 513 608 r,1099 448 477 510 548 g,1114 453 477 750 757 r,1129 740 750 962 965 r,1144 890 958 962 1025 g,1159 870 937 957 1013 g,1174 935 939 955 968 r'
};
for (const t in bars) {
  bars[t].split(',').forEach(row => {
    const [x, high, top, bottom, low, dir] = row.split(' ');
    const cx = px(t, +x), y1 = py(t, +top), y2 = py(t, +bottom);
    line(price, 'wick', cx + .5, py(t, +high), cx + .5, py(t, +low));
    add(price, 'rect', { class: dir === 'g' ? 'up' : 'down', x: cx - 1.5, y: y1 + .5 - 1, width: 4, height: Math.max(1, y2 - y1) });
  });
}

// ---- harmonic patterns ----
const path = (t, pts) => pts.map(([x, y, tt], i) => `${i ? 'L' : 'M'}${px(tt || t, x)} ${py(tt || t, y)}`).join('');
const area = (color, t, pts) => add(price, 'path', { class: 'area ' + color, d: path(t, pts) + 'z' });
const leg = (color, t, pts) => add(price, 'path', { class: 'leg ' + color, d: path(t, pts) });
const dots = (t, ...pts) => add(price, 'path', { class: 'dots', d: path(t, pts) });

area('red', 'A', [[441, 790], [333, 1185], [168, 1185]]);
leg('red', 'A', [[441, 790], [332, 1188]]);
dots('A', [441, 790], [168, 1185]);
dots('A', [441, 790], [-140, 1188]);
area('red', 'A', [[794, 895], [852, 1185], [1068, 1185], [1090, 1003]]);
area('red', 'A', [[1090, 1003], [1105, 1185], [1220, 1185], [1632, 285]]);
leg('red', 'A', [[794, 895], [852, 1188]]);
leg('red', 'A', [[1068, 1188], [1090, 1003], [1105, 1188]]);
leg('red', 'A', [[1220, 1185], [1640, 278]]);
leg('red', 'A', [[1050, 1004], [1134, 1004]]);
dots('A', [794, 895], [1090, 1003], [1632, 285], [794, 895]);
area('green', 'B', [[172, 187], [326, 1185], [-250, 1185]]);
area('green', 'B', [[335, 1185], [553, 362], [765, 1185]]);
leg('green', 'B', [[-250, 1185], [172, 187], [327, 1188]]);
leg('green', 'B', [[334, 1188], [553, 362], [766, 1188]]);
dots('B', [172, 187], [553, 358]);
area('green', 'C', [[742, 953], [984, 40], [1044, 497]]);
area('green', 'C', [[1044, 497], [1089, 185], [1240, 925]]);
dots('C', [984, 40], [1089, 185]);
dots('C', [742, 953], [1044, 497], [1240, 925], [742, 953]);
leg('green', 'C', [[742, 953], [984, 40], [1044, 497], [1089, 185], [1240, 925]]);
leg('green', 'C', [[1000, 497], [1088, 497]]);
area('gray', 'D', [[298, 1298], [510, 87], [690, 632]]);
area('gray', 'D', [[690, 632], [752, 253], [1191, 1257]]);
dots('D', [510, 87], [752, 253]);
dots('D', [298, 1298], [690, 632], [1191, 1257], [298, 1298]);
leg('gray', 'D', [[298, 1298], [510, 87], [690, 632], [752, 253], [1191, 1257]]);

// targets: colour, line start, line end, y, box width, text
[
  ['green', 258, 310, 593, 155, 'HOP: (18037.75)'],
  ['green', 687, 738, 446, 155, 'HOP: (18275.75)'],
  ['red', 258, 310, 814, 202, '1.618 (XA) (17678.75)'],
  ['red', 258, 310, 857, 228, '1.272 AB=CD (17608.50)'],
  ['red', 687, 738, 583, 202, '1.618 (XA) (18053.50)'],
  ['red', 687, 738, 612, 228, '1.272 AB=CD (18006.50)'],
  ['red', 687, 738, 653, 203, '2.618 (BC) (17940.00)'],
  ['red', 687, 788, 772, 136, 'T1: (17746.50)'],
  ['green', 949, 1051, 717, 135, 'T2: (17835.50)'],
  ['green', 949, 1051, 827, 135, 'T1: (17658.75)'],
  ['green', 1554, 1656, 416, 135, 'T2: (18324.25)'],
  ['green', 1554, 1656, 485, 135, 'T1: (18211.50)'],
  ['green', 1554, 1605, 548, 226, '1.414 AB=CD (18110.00)'],
  ['green', 1554, 1605, 573, 202, '0.886 (XA) (18068.75)'],
  ['red', 1554, 1605, 651, 155, 'HOP: (17942.75)'],
  ['gray', 1917, 1968, 516, 203, '2.240 (BC) (18161.50)'],
  ['gray', 1917, 1968, 537, 202, '0.886 (XA) (18128.00)']
].forEach(([color, x1, x2, y, w, text]) => {
  line(price, 'dash ' + color, x1, y, x2 - 1, y);
  add(price, 'rect', { class: 'box ' + color, x: x2, y: y - 13, width: w, height: 27 });
  label(price, 'name ' + color, x2 + 2, y + 7, text);
});
line(price, 'dash green', 1554, 532, 1604, 532);
line(price, 'dash gray', 1917, 528, 1967, 528);

// arrows: tile, x, tip y, direction
[['A', 455, 903, 1], ['A', 1205, 825, 1], ['A', 794, 893, 1], ['B', 186, 203, 1], ['B', 1048, 235, 1], ['B', 283, 942, -1],
 ['C', 106, 598, 1], ['C', 619, 403, 1], ['C', 394, 1083, -1], ['D', 568, 281, 1]].forEach(([t, x, y, s]) => {
  add(price, 'path', { class: 'arrow', d: `M${px(t, x) + .5} ${py(t, y)}l-6 ${-7 * s}h3.5v${-9 * s}h5v${9 * s}h3.5z` });
});
[['A', 387, 980], ['B', 117, 305], ['C', 1241, 925]].forEach(([t, x, y]) => {
  const cx = px(t, x), cy = py(t, y);
  add(price, 'circle', { class: 'sun', cx, cy, r: 8 });
  for (let a = 0; a < 8; a++) {
    const c = Math.cos(a * Math.PI / 4), s = Math.sin(a * Math.PI / 4);
    line(price, 'sun', cx + c * 9, cy + s * 9, cx + c * 13, cy + s * 13);
  }
});

// point names and ratios
[
  ['A', 442, 776, 'D', 'yellow'], ['A', 794, 886, 'X', 'yellow'], ['A', 1091, 993, 'B', 'yellow'],
  ['B', 131, 262, 'D', 'yellow'], ['B', 172, 171, 'A', 'yellow'], ['B', 553, 347, 'C', 'yellow'],
  ['C', 984, 25, 'A', 'yellow'], ['C', 1089, 175, 'C', 'yellow'], ['C', 1043, 552, 'B', 'yellow'],
  ['C', 743, 1010, 'X', 'yellow'], ['C', 1241, 981, 'D', 'yellow'],
  ['D', 509, 72, 'A', 'gray'], ['D', 752, 238, 'C', 'gray'], ['D', 689, 687, 'B', 'gray'], ['D', 297, 1355, 'X', 'gray'],
  ['C', 1045, 622, 'Bat', 'green'], ['D', 692, 755, 'Bat', 'gray'], ['A', 1091, 923, 'Deep Crab', 'red']
].forEach(([t, x, y, s, color]) => label(price, 'name mid ' + color, px(t, x), py(t, y), s));
[
  ['A', 1220, 603, '1.618'], ['A', 1368, 658, '2.618'], ['A', 943, 966, '0.886'], ['B', 364, 288, '0.786'],
  ['C', 1037, 129, '0.707'], ['C', 894, 741, '0.500'], ['C', 1143, 727, '2.000'], ['C', 993, 954, '0.886'],
  ['D', 631, 183, '0.707', 'gray'], ['D', 493, 982, '0.500', 'gray'], ['D', 940, 961, '2.240', 'gray'], ['D', 745, 1294, '0.886', 'gray']
].forEach(([t, x, y, s, color]) => label(price, 'ratio mid ' + (color || ''), px(t, x), py(t, y), s));
label(price, 'sum', 1168, 730, 'Σ: 7212K / 674.25');
label(price, 'sum', 1546, 623, 'Σ: 5746K / 702.75');
label(price, 'sum', 1863, 503, 'Σ: 969K / 410.50');
line(price, 'cross', 10, 382.5, 2467, 382.5);
line(price, 'cross', 2100.5, 30, 2100.5, 875);

// ---- indicator panels ----
function series(root, cls, data) {
  const pts = [];
  for (const t in data) {
    const [ox, oy, sx, sy] = tiles[t];
    data[t].split(' ').forEach(p => {
      const [x, y] = p.split(',').map(Number);
      pts.push((ox + x / sx).toFixed(1) + ',' + (oy + y / sy).toFixed(1));
    });
  }
  add(root, 'polyline', { class: 'series ' + cls, points: pts.join(' ') });
}
const band = (root, y1, y2) => add(root, 'rect', { class: 'shade', x: 10, y: y1, width: 2461, height: y2 - y1 });
function runs(root, y, stops) {
  for (let i = 0; i < stops.length - 2; i += 2) {
    add(root, 'line', { x1: stops[i], x2: stops[i + 2], y1: y + .5, y2: y + .5, stroke: stops[i + 1], 'stroke-width': 3 });
  }
}

const hsi = byId('hsi');
band(hsi, 913, 996);
grid(hsi, 876, 1036, []);
line(hsi, 'mean', 10, 954.5, 2471, 954.5);
line(hsi, 'aqua', 10, 900.5, 2471, 900.5);
line(hsi, 'aqua', 10, 1008.5, 2471, 1008.5);
line(hsi, 'high', 10, 913, 2471, 913);
line(hsi, 'low', 10, 996, 2471, 996);
series(hsi, 'teal', {
G: '41,245 50,250 59,273 68,252 77,246 86,265 95,308 105,366 114,373 124,369 133,345 141,300 150,262 161,184 170,194 179,209 188,219 197,243 207,277 216,260 225,240 234,215 244,172 253,162 262,150 273,138 282,117 291,93 301,72 310,168 320,235 328,285 338,321 348,336 357,339 365,339 374,342 383,321 393,321 402,324 411,298 420,243 430,205 439,152 448,135 458,114 467,98 476,108 485,168 495,230 506,258 515,252 524,236 533,208 542,190 552,235 561,291 570,313 579,332 589,346 598,356 607,315 616,277 626,300 635,305 644,320 653,312 662,298 671,270 681,230 690,170 699,128 709,145 718,158 729,194 738,265 747,295 757,350 766,395 775,425 784,451 793,424 802,396 811,323 820,312 830,320 839,335 849,320 858,323 867,314 877,265 886,245 895,208 904,179 913,194 922,212 932,210 941,195 950,159 961,140 970,122 979,150 989,172 998,218 1008,273 1016,267 1026,242 1036,242 1044,230 1053,205 1062,242 1072,275 1081,308 1091,341 1100,312 1109,287 1118,225 1127,193 1136,185 1146,206 1155,214 1164,229 1174,234 1183,243 1194,251 1203,218 1213,234 1222,233 1231,190 1240,150 1249,105 1258,74 1267,71 1277,89 1286,92 1295,85 1305,170 1313,215 1322,275 1332,358 1341,413 1350,423 1360,385 1369,363 1378,347 1388,359 1397,341 1406,312 1416,265 1425,222 1435,203 1444,225 1454,213 1463,200 1472,170 1481,145 1490,180 1499,198 1509,200 1518,188 1527,185 1537,152 1546,165 1555,222 1565,285',
H: '6,278 15,286 24,296 33,310 43,331 52,315 61,335 73,360 82,382 91,376 100,389 110,374 118,333 127,298 136,310 146,320 155,330 164,353 173,353 183,368 192,280 201,215 210,145 220,97 229,68 238,75 248,72 257,62 266,62 275,95 285,100 294,117 305,168 314,203 323,213 332,246 341,287 350,265 359,258 369,239 378,250 388,273 397,306 406,289 415,278 424,275 433,297 443,267 452,250 461,275 471,308 480,293 489,293 498,304 508,329 517,280 527,240 536,206 546,216 555,200 565,190 574,179 583,155 592,127 602,188 611,218 621,218 630,222 639,228 648,224 657,238 666,250 675,263 684,268 694,315 703,370 712,420 722,460 731,483 740,466 749,458 760,456 769,390 779,300 788,252 797,238 806,210 816,190 825,210 834,230 843,248 853,233 862,192 871,160 880,118 889,90 899,74 908,85 917,140 926,147 936,178 945,165 955,206 964,245 973,300 983,345 993,363 1002,353 1011,356 1020,302 1030,274 1039,235 1048,208 1057,186 1066,178 1076,140 1085,186 1094,184 1103,174 1113,193 1122,187 1132,168 1141,187 1150,225 1159,246 1168,289 1177,285 1186,267 1195,262 1204,258 1216,300 1225,303 1234,318 1243,321 1253,293 1262,314 1271,299 1280,297 1290,328 1299,342 1308,354 1317,372 1327,362 1336,360 1345,270 1354,195 1363,150 1373,150 1382,170 1392,210 1401,250 1410,310 1419,354 1428,356 1440,332 1449,260 1458,222 1467,188 1476,166 1486,180 1495,204 1504,198 1513,155 1523,118 1532,80 1540,54 1549,48 1558,45',
I: '18,128 28,190 38,255 46,308 56,350 65,352 74,330 83,328 92,326 102,375 112,372 122,372 131,358 140,347 150,312 159,312 168,289 178,291 187,345 196,378 205,361 215,392 224,406 233,406 242,411 252,363 261,345 270,320 279,302 289,309 298,317 307,331 316,309 325,267 335,292 345,305 355,320 364,320 374,248 383,280 392,312 401,330 410,356'
});

const rsi = byId('rsi');
band(rsi, 1089, 1193);
grid(rsi, 1041, 1200, [1115]);
line(rsi, 'bound', 10, 1088.5, 2471, 1088.5);
line(rsi, 'bound', 10, 1193.5, 2471, 1193.5);
line(rsi, 'navy', 10, 1141.5, 2471, 1141.5);
line(rsi, 'swing', 19, 1050, 175, 1050);
series(rsi, 'gold', {
G: '41,742 50,800 59,832 69,776 78,773 87,820 96,888 105,906 115,862 124,860 133,852 143,825 151,825 161,736 170,725 179,739 188,718 197,755 207,793 216,731 225,730 234,720 244,680 253,704 262,690 273,678 282,656 292,626 301,621 310,612 319,586 328,620 338,672 347,663 357,684 366,682 375,696 384,682 394,712 403,714 412,695 421,664 430,668 440,621 449,652 458,622 467,617 476,636 486,700 495,753 505,730 515,708 524,705 533,693 542,698 552,765 561,805 570,786 579,804 589,801 598,824 607,780 616,773 626,852 635,836 644,857 653,825 662,822 671,810 681,790 691,718 699,720 709,765 719,762 729,778 738,835 747,820 757,900 766,933 775,947 784,971 794,917 803,921 812,850 821,908 831,933 840,933 849,893 858,911 867,904 877,838 886,860 895,806 905,725 914,770 923,768 932,751 941,734 951,690 961,705 970,694 980,740 989,729 998,760 1008,803 1017,751 1026,742 1036,766 1045,757 1053,738 1063,798 1072,806 1081,828 1091,834 1100,786 1109,794 1118,741 1127,757 1137,700 1146,717 1155,714 1164,719 1174,714 1184,722 1194,725 1203,705 1213,736 1222,729 1231,688 1240,677 1249,657 1258,634 1267,650 1277,668 1286,645 1295,630 1305,758 1314,760 1323,785 1332,900 1341,941 1350,914 1360,859 1369,877 1378,891 1388,932 1397,878 1406,861 1416,816 1426,813 1435,820 1445,848 1454,804 1463,802 1472,767 1482,757 1491,815 1500,798 1509,780 1518,758 1527,768 1537,740 1546,762 1555,827 1565,860',
H: '6,793 15,818 24,834 33,861 43,870 52,833 61,897 72,915 82,935 91,905 100,940 109,915 118,882 127,880 137,916 146,921 155,915 164,926 173,918 183,938 192,797 201,773 210,710 220,708 229,696 238,711 248,682 257,654 266,665 275,691 285,665 294,678 305,718 314,722 323,710 332,745 342,767 351,729 360,744 369,733 378,768 388,780 397,799 406,762 415,774 424,782 434,814 443,766 452,770 461,826 471,844 480,803 489,813 498,833 508,868 517,788 528,758 537,764 546,807 556,767 565,758 574,752 583,733 592,714 602,692 611,660 620,631 630,643 639,654 649,656 658,675 667,674 685,678 694,747 703,820 712,893 722,930 731,947 740,920 750,957 761,966 769,870 779,810 788,820 797,844 806,805 816,782 825,825 834,831 843,834 853,795 862,741 872,747 881,720 890,703 900,695 909,712 918,750 926,711 936,737 945,688 955,780 964,815 974,852 983,880 993,859 1003,849 1011,870 1021,805 1030,822 1040,788 1049,789 1058,784 1067,780 1076,734 1085,817 1095,744 1104,733 1113,765 1122,736 1132,725 1141,752 1150,785 1159,782 1168,810 1177,786 1187,777 1196,789 1205,789 1216,844 1225,816 1234,830 1243,828 1253,807 1262,875 1271,828 1281,845 1290,900 1299,886 1308,902 1317,909 1327,891 1336,900 1346,788 1354,768 1363,748 1373,788 1382,800 1391,814 1401,822 1410,875 1419,893 1429,866 1439,844 1448,787 1457,804 1467,786 1476,771 1486,792 1495,803 1504,777 1514,708 1523,681 1532,678 1540,641 1549,650 1558,649',
I: '18,694 28,775 37,772 46,801 56,801 74,777 83,795 92,795 102,865 112,826 122,832 132,824 141,826 150,807 159,824 168,800 178,820 187,889 196,878 205,838 215,915 224,915 233,905 242,912 252,849 261,869 279,858 289,869 298,867 307,876 316,850 325,809 335,878 345,864 355,869 364,854 374,955 383,1001 392,1001 401,989 410,995'
});
runs(rsi, 1088, [22, '#f00', 153, '#00f', 1912]);
runs(rsi, 1193, [22, '#00f', 1912]);

const amp = byId('amp');
band(amp, 1247, 1317);
grid(amp, 1205, 1352, [1228, 1333]);
line(amp, 'bound', 10, 1246.5, 2471, 1246.5);
line(amp, 'bound', 10, 1316.5, 2471, 1316.5);
line(amp, 'navy', 10, 1281.5, 2471, 1281.5);
[[19, 133, 1237], [271, 538, 1228], [538, 683, 1236], [714, 992, 1228], [1022, 1186, 1224], [1712, 1914, 1222],
 [19, 1274, 1345], [1274, 1914, 1341]].forEach(([a, b, y]) => line(amp, 'swing', a, y, b, y));
series(amp, 'gold', {
G: '41,1177 50,1244 59,1279 68,1208 78,1205 87,1260 96,1330 105,1349 115,1292 124,1286 133,1275 143,1242 151,1241 161,1138 170,1135 179,1153 188,1133 197,1185 207,1226 216,1152 225,1152 235,1145 245,1100 254,1138 263,1120 274,1112 283,1085 291,1060 310,1060 319,1029 328,1075 338,1140 347,1132 357,1157 366,1155 375,1176 384,1156 394,1190 403,1200 412,1172 421,1128 430,1140 440,1074 449,1117 458,1080 467,1080 476,1108 486,1180 495,1238 505,1207 515,1173 524,1172 533,1161 542,1168 552,1242 561,1280 570,1253 579,1268 589,1267 598,1289 607,1225 616,1219 626,1306 635,1284 644,1300 653,1260 662,1257 671,1244 681,1220 691,1135 699,1142 709,1194 719,1194 729,1215 738,1274 747,1258 757,1340 766,1378 775,1390 784,1411 794,1335 803,1335 812,1252 821,1322 831,1350 840,1343 849,1293 858,1311 867,1300 877,1225 886,1252 895,1195 905,1108 913,1170 923,1172 932,1155 941,1138 951,1097 961,1118 970,1112 980,1167 989,1158 998,1195 1008,1247 1017,1185 1026,1172 1036,1204 1045,1196 1053,1171 1063,1245 1072,1250 1081,1273 1091,1279 1100,1218 1109,1226 1118,1164 1127,1186 1137,1120 1146,1145 1155,1143 1164,1155 1174,1156 1184,1169 1194,1173 1203,1150 1213,1188 1222,1180 1231,1132 1240,1122 1249,1096 1258,1074 1267,1100 1277,1123 1286,1105 1295,1087 1305,1230 1314,1230 1323,1260 1332,1370 1341,1406 1350,1370 1360,1294 1369,1312 1378,1323 1388,1363 1397,1297 1406,1276 1416,1220 1426,1218 1435,1230 1445,1261 1454,1211 1463,1207 1472,1170 1482,1166 1491,1234 1500,1213 1509,1194 1518,1172 1527,1186 1537,1154 1546,1185 1555,1258 1565,1296',
H: '6,1216 15,1245 24,1263 33,1291 43,1299 52,1249 61,1325 72,1340 82,1358 91,1320 100,1360 109,1325 118,1284 127,1274 137,1323 146,1323 155,1315 164,1323 173,1308 183,1332 192,1175 201,1152 210,1092 220,1097 229,1090 238,1113 248,1085 257,1062 266,1085 275,1121 285,1094 294,1117 305,1167 314,1172 323,1161 332,1203 342,1228 351,1180 360,1196 369,1185 378,1222 388,1236 397,1258 406,1208 415,1223 424,1230 434,1267 443,1210 452,1212 461,1272 471,1295 480,1243 489,1254 498,1273 508,1309 517,1212 528,1176 537,1187 546,1238 556,1188 565,1180 574,1176 583,1157 592,1135 602,1108 611,1078 620,1051 630,1075 639,1096 648,1106 657,1135 667,1141 685,1151 694,1220 703,1295 712,1372 722,1400 731,1413 740,1370 750,1402 761,1411 769,1285 779,1219 788,1232 797,1259 806,1212 816,1187 825,1242 834,1248 843,1251 853,1210 862,1143 871,1155 881,1132 890,1115 900,1112 909,1131 918,1187 926,1130 936,1172 945,1116 955,1225 964,1262 974,1298 983,1327 993,1300 1003,1285 1011,1303 1021,1225 1030,1244 1040,1206 1049,1206 1058,1201 1067,1199 1076,1146 1085,1249 1095,1162 1104,1148 1113,1194 1122,1159 1132,1151 1141,1187 1150,1225 1159,1221 1168,1255 1177,1220 1187,1212 1196,1222 1205,1224 1216,1288 1225,1249 1234,1269 1243,1263 1253,1236 1262,1312 1271,1251 1281,1272 1290,1330 1299,1311 1308,1328 1317,1329 1327,1304 1336,1310 1346,1181 1354,1163 1363,1148 1373,1197 1382,1213 1391,1230 1401,1239 1410,1297 1419,1321 1429,1285 1439,1258 1448,1190 1457,1212 1467,1195 1476,1179 1486,1206 1495,1221 1504,1192 1514,1115 1523,1086 1532,1091 1540,1054 1549,1074 1558,1077',
I: '18,1108 28,1207 37,1204 46,1239 56,1239 65,1223 74,1209 83,1234 92,1232 102,1310 112,1255 122,1265 132,1256 141,1256 150,1232 159,1254 168,1225 178,1248 187,1323 196,1304 205,1254 215,1341 224,1335 233,1322 242,1327 252,1246 261,1273 279,1258 289,1272 298,1271 307,1279 316,1243 325,1196 335,1283 345,1268 355,1273 364,1250 374,1370 383,1418 392,1410 401,1390 410,1390'
});
runs(amp, 1246, [22, '#f00', 92, '#00f', 268, '#f00', 490, '#00f', 546, '#f00', 615, '#00f', 717, '#f00', 964, '#00f', 1060, '#f00', 1176, '#00f', 1745, '#f00', 1912]);
runs(amp, 1316, [22, '#008000', 57, '#00f', 1272, '#008000', 1892, '#00f', 1912]);
[[hsi, 876, 1040], [rsi, 1041, 1204], [amp, 1205, 1351]].forEach(([root, a, b]) => line(root, 'cross', 2100.5, a, 2100.5, b));

// ---- axes ----
function scale(id, rows) {
  rows.forEach(([y, text]) => {
    line(byId(id), 'tick', 2474, y + .5, 2479, y + .5);
    label(byId(id), '', 2482, y + 5, text);
  });
}
function tag(id, y, fill, color, text) {
  add(byId(id), 'path', { class: 'tag', d: `M2467.5 ${y}L2473.5 ${y - 10}H2545V${y + 10}H2473.5z`, fill });
  add(byId(id), 'text', { x: 2482, y: Math.floor(y) + 5, style: 'fill:' + color }, text);
}
const prices = [];
for (let p = 18900; p >= 17600; p -= 100) prices.push([Math.round(60.5 + (18900 - p) * .6165), p + '.00']);
scale('price-axis', prices);
tag('price-axis', 382.5, '#3f3f46', '#fff', '18377.50');
tag('price-axis', 468.5, '#000', '#fff', '18238.50');
scale('hsi-axis', [[900, '100'], [954, '50'], [1008, '0']]);
tag('hsi-axis', 964.5, '#008b8b', '#fff', '40.96');
scale('rsi-axis', [[1062, '80'], [1115, '60'], [1141, '50'], [1167, '40']]);
tag('rsi-axis', 1088.5, '#00f', '#fff', '70');
tag('rsi-axis', 1187.5, '#ff0', '#000', '32.10');
tag('rsi-axis', 1193.5, '#00f', '#fff', '30');
scale('amp-axis', [[1228, '80'], [1263, '60'], [1298, '40']]);
tag('amp-axis', 1221.5, '#808080', '#000', '84.23');
tag('amp-axis', 1246.5, '#f00', '#fff', '70');
tag('amp-axis', 1325.5, '#ff0', '#000', '24.71');
tag('amp-axis', 1340.5, '#808080', '#000', '16.45');
tag('amp-axis', 1316.5, '#00f', '#fff', '30');

const dates = byId('dates');
const days = { 47: 'Jan 17', 132: 'Jan 19', 208: 'Jan 23', 279: 'Jan 25', 354: 'Jan 29', 460: 'Feb 1', 536: 'Feb 5', 606: 'Feb 7', 692: 'Feb 12', 768: 'Feb 14', 837: 'Feb 16', 924: 'Feb 21', 1004: 'Feb 23', 1099: 'Feb 28', 1201: 'Mar 4', 1272: 'Mar 6', 1351: 'Mar 8', 1433: 'Mar 12', 1503: 'Mar 14', 1578: 'Mar 18', 1650: 'Mar 20', 1745: 'Mar 25', 1831: 'Mar 28', 1932: 'Apr 3', 2008: 'Apr 7', 2189: 'Apr 16', 2280: 'Apr 19', 2364: 'Apr 24', 2441: 'Apr 28' };
for (const x in days) {
  line(dates, 'tick', +x + .5, 1357, +x + .5, 1362);
  label(dates, 'mid', x, 1382, days[x]);
}
vertical.filter(x => x > 1932).forEach(x => line(dates, 'tick', x + .5, 1357, x + .5, 1362));
add(dates, 'rect', { class: 'tag', x: 2068.5, y: 1363.5, width: 64, height: 28, fill: '#3f3f46' });
add(dates, 'text', { class: 'mid', x: 2100, y: 1382, style: 'fill:#fff' }, '23:47:14');
```
